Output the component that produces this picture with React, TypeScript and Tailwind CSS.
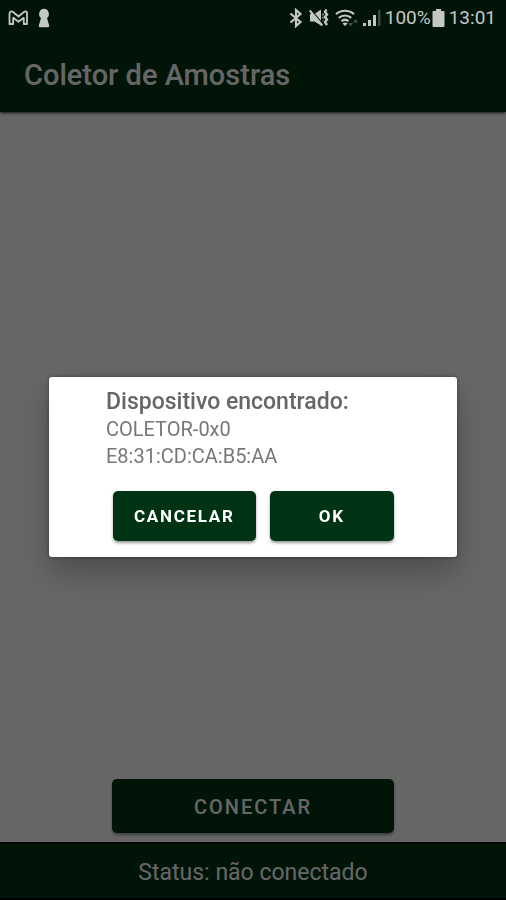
import type { ButtonHTMLAttributes } from 'react';
import { clsx } from 'clsx';

function GmailIcon() {
  return (
    <svg width="20" height="16" viewBox="0 0 20 16" fill="none" stroke="currentColor" strokeWidth="1.8" strokeLinejoin="round">
      <path d="M1.500 3.800C1.500 1.500 3.500.9 5 2L10.500 6.500l5.500-4.500C17.500.9 19.500 1.500 19 3.800V14h-3.200V7.800L10.500 11.800 5.200 7.800V14H1.500z" />
    </svg>
  );
}

function KeyholeIcon() {
  return (
    <svg width="12" height="20" viewBox="0 0 12 20" fill="currentColor">
      <path d="M6 .8a5.200 5.200 0 0 1 3 9.200L11.200 17.500c.2 1-.2 1.700-1.200 1.700H2c-1 0-1.400-.7-1.200-1.700L3 10A5.200 5.200 0 0 1 6 .8z" />
    </svg>
  );
}

function BluetoothIcon() {
  return (
    <svg width="14" height="20" viewBox="0 0 14 20" fill="none" stroke="currentColor" strokeWidth="2.200">
      <path d="M1.500 5.500l10 8.500L7 18V2l4.500 4-10 8.500" />
    </svg>
  );
}

function MuteIcon() {
  return (
    <svg width="20" height="20" viewBox="0 0 20 20">
      <path d="M1 6h4.500l6.500-4.500v16L5.500 13.500H1z" fill="currentColor" />
      <path d="M2.500 2.500l11 13" stroke="#001408" strokeWidth="1.200" />
      <path d="M.8 2.500l12.500 15" stroke="currentColor" strokeWidth="2" />
      <path d="M14 5.500v7" stroke="currentColor" strokeWidth="1.200" strokeDasharray="2 1.200" />
      <path d="M17.500 1.500l-1.500 2.500 2 2.500-2 2.500 2 2.500-2 2.500 2 3" fill="none" stroke="currentColor" strokeWidth="2.400" />
    </svg>
  );
}

function WifiIcon() {
  return (
    <svg width="24" height="20" viewBox="0 0 24 20" fill="none" stroke="currentColor" strokeWidth="2.200">
      <path d="M1 6.200a13.500 13.500 0 0 1 18 0M3.800 9.800a9.500 9.500 0 0 1 12.400 0M6.500 13.200a5.500 5.500 0 0 1 7 0" />
      <path d="M7.500 15.500a4 4 0 0 1 5 0L10 18z" fill="currentColor" stroke="none" />
      <path d="M13 15h5l-2.500 3.500zM18 14.500h5L20.500 11z" fill="currentColor" stroke="none" opacity=".35" />
    </svg>
  );
}

function SignalIcon() {
  return (
    <svg width="18" height="20" viewBox="0 0 18 20" fill="currentColor">
      <path d="M0 15h3v3H0zM5 12h3v6H5zM10 7h3v11h-3z" />
      <path d="M15 2h2.500v16H15z" opacity=".3" />
    </svg>
  );
}

function BatteryIcon() {
  return (
    <svg width="13" height="20" viewBox="0 0 13 20" fill="currentColor">
      <path d="M4 1h5v2h2.500a1 1 0 0 1 1 1v14a1 1 0 0 1-1 1h-10a1 1 0 0 1-1-1V4a1 1 0 0 1 1-1H4z" />
    </svg>
  );
}

function StatusBar() {
  return (
    <div className="relative z-20 flex h-9 items-center justify-between bg-[#001408] pr-2.5 pl-2 text-[#c4c8c4]">
      <div className="flex items-center gap-2.5">
        <GmailIcon />
        <KeyholeIcon />
      </div>
      <div className="flex items-center text-[19px] leading-6">
        <div className="mr-1 flex items-center gap-1.5">
          <BluetoothIcon />
          <MuteIcon />
          <WifiIcon />
        </div>
        <SignalIcon />
        <span className="mr-px ml-1">100%</span>
        <BatteryIcon />
        <span className="ml-1">13:01</span>
      </div>
    </div>
  );
}

function Button({ className, ...props }: ButtonHTMLAttributes<HTMLButtonElement>) {
  return (
    <button
      type="button"
      className={clsx(
        'rounded-[5px] bg-[#003314] text-center tracking-widest text-white uppercase shadow-[0_2px_3px_rgba(0,0,0,0.4)]',
        className
      )}
      {...props}
    />
  );
}

function DeviceDialog() {
  return (
    <div className="fixed inset-0 z-10 flex items-center justify-center bg-black/60 px-[49px] pt-[34px]">
      <div
        role="dialog"
        aria-labelledby="device-title"
        className="w-full rounded-[3px] bg-white px-[57px] pt-[11px] pb-4 text-[#777] shadow-[0_16px_30px_rgba(0,0,0,0.25),0_0_4px_rgba(0,0,0,0.4)]"
      >
        <h2 id="device-title" className="text-[23px] leading-7 font-medium text-[#666]">
          Dispositivo encontrado:
        </h2>
        <p className="text-[20px] leading-[27px]">COLETOR-0x0</p>
        <p className="text-[20px] leading-[27px]">E8:31:CD:CA:B5:AA</p>
        <div className="mt-[21px] flex gap-3.5 pr-1.5 pl-[7px]">
          <Button className="h-[50px] px-[21px] pt-0.5 text-[17px] font-bold">Cancelar</Button>
          <Button className="h-[50px] grow px-5 pt-0.5 text-[17px] font-bold">Ok</Button>
        </div>
      </div>
    </div>
  );
}

export default function App() {
  return (
    <div className="flex min-h-screen flex-col bg-white font-[Roboto,sans-serif]">
      <StatusBar />
      <header className="flex h-[76px] items-center bg-[#003314] px-6 pt-0.5 shadow-[0_1px_3px_rgba(0,0,0,0.8)]">
        <h1 className="text-[29px] leading-8 font-medium text-white">Coletor de Amostras</h1>
      </header>

      <main className="flex grow flex-col justify-end px-28 pb-[9px]">
        <Button className="h-[54px] w-full pt-0.5 text-[20px] font-medium">Conectar</Button>
      </main>

      <footer className="flex h-[58px] items-center justify-center border-y-2 border-black bg-[#003314] pt-1 text-[23px] text-white">
        Status: não conectado
      </footer>

      <DeviceDialog />
    </div>
  );
}
